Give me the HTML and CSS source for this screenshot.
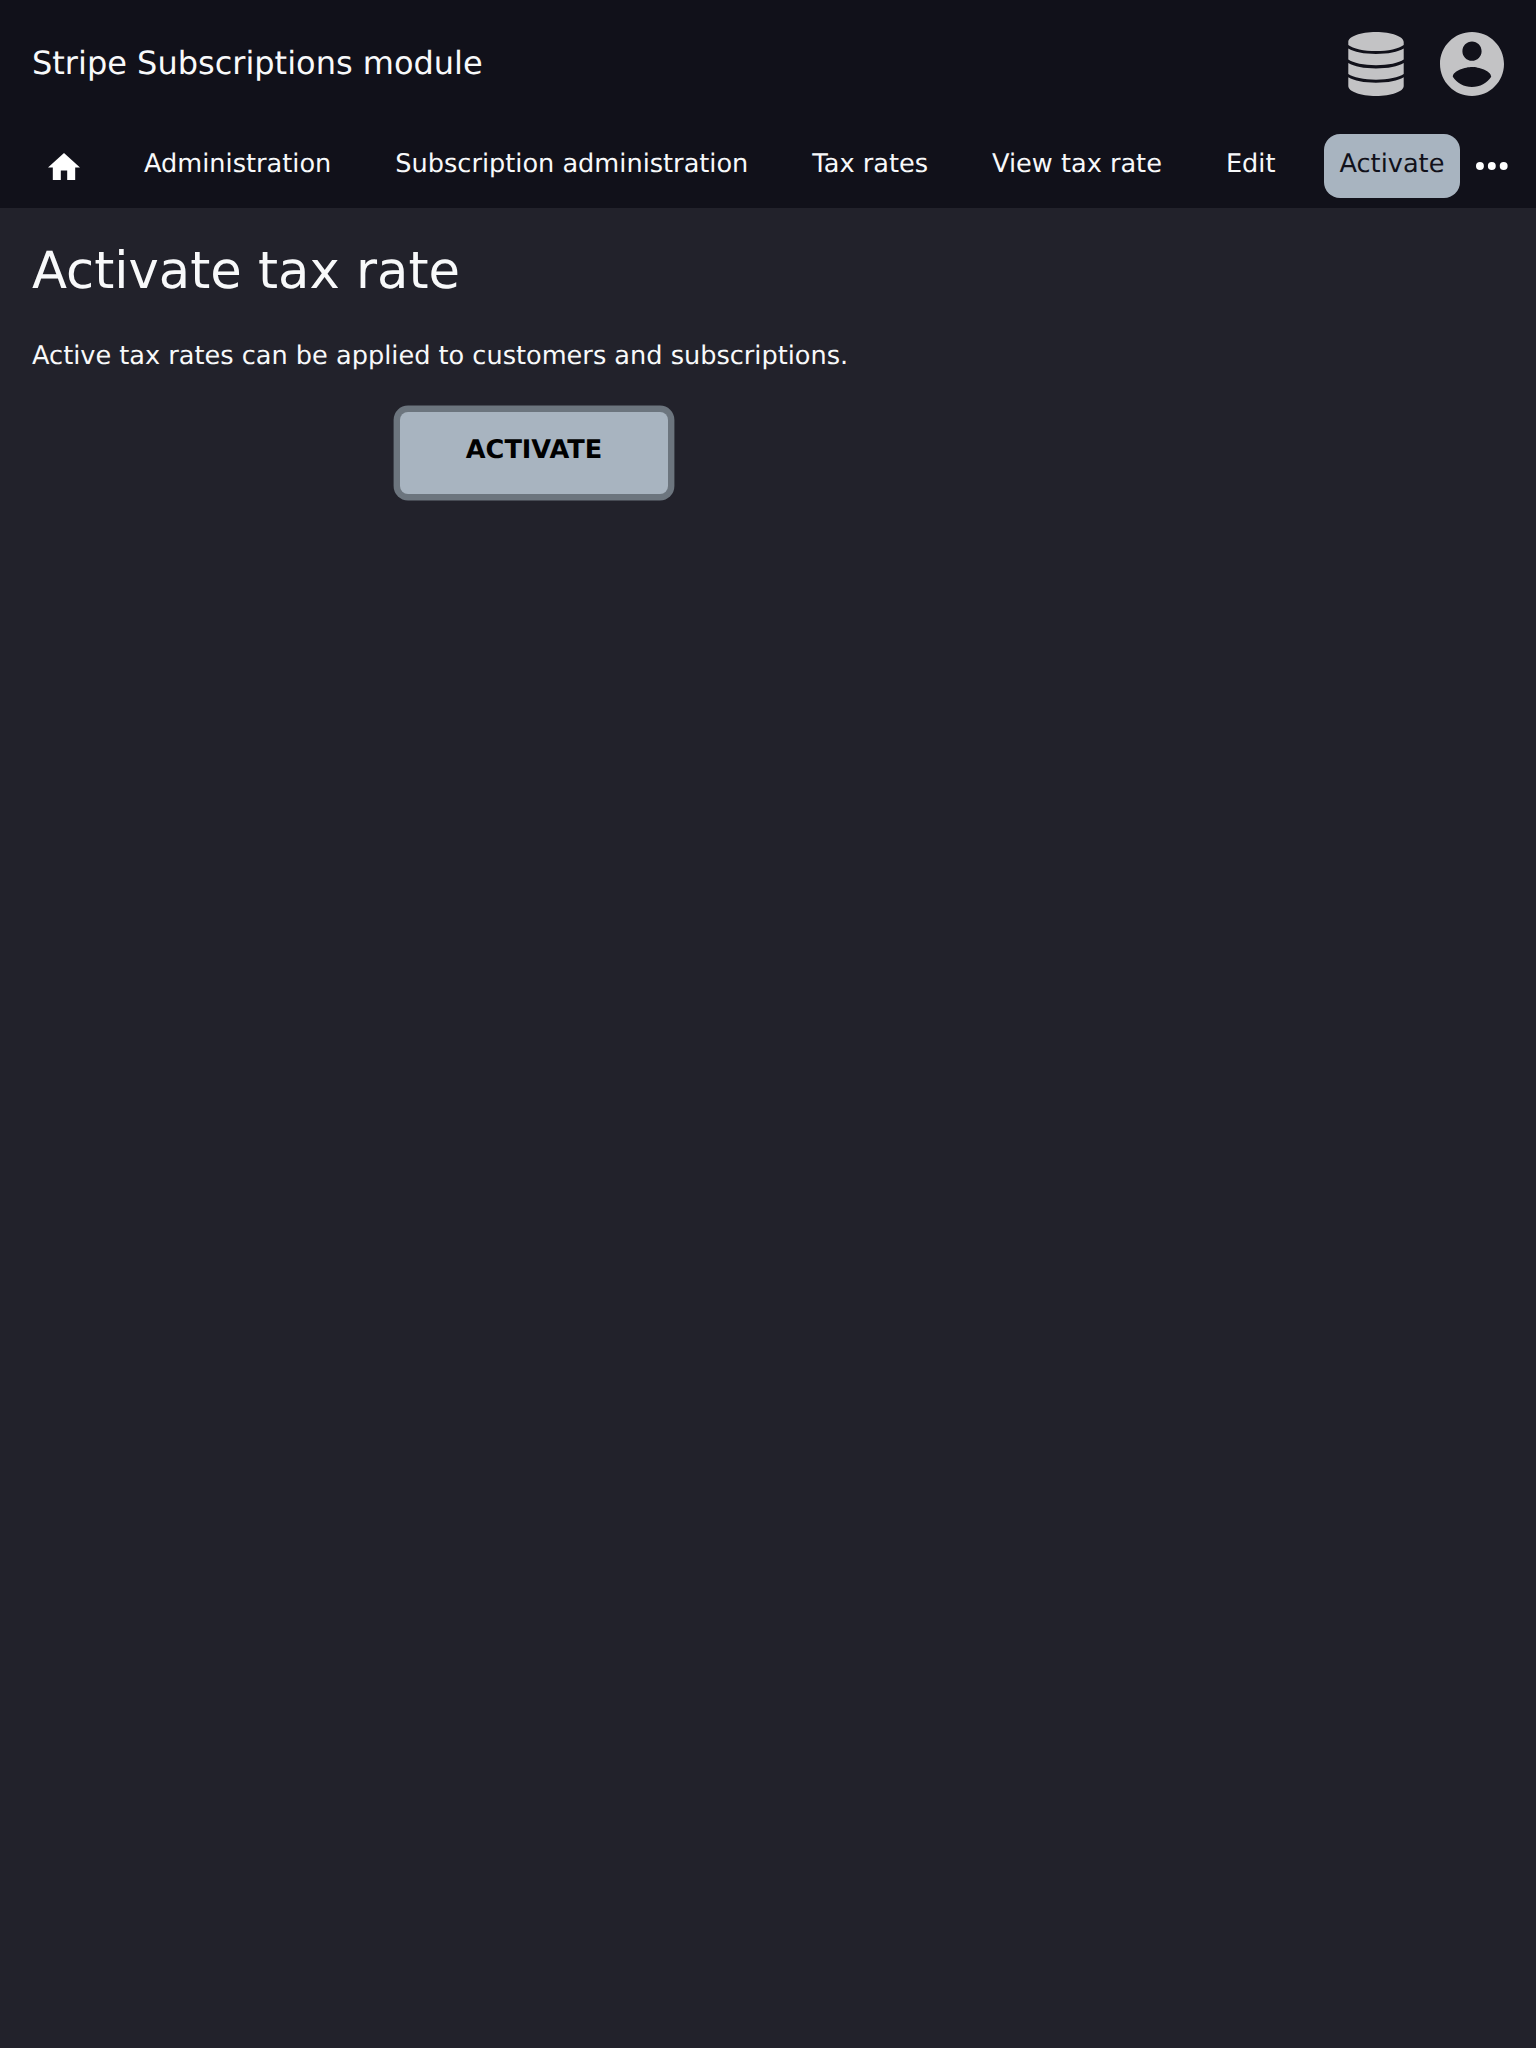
FILE: index.html
```html
<!DOCTYPE html>
<html lang="en">
<head>
<meta charset="utf-8">
<title>Activate tax rate</title>
<link rel="stylesheet" href="styles.css">
</head>
<body>
<header class="header">
  <div class="topbar">
    <span class="brand">Stripe Subscriptions module</span>
    <div class="tools">
      <svg class="icon-db" viewBox="0 0 56 64"><path d="M.3 10C.3 4.500 12.500 0 28 0s27.700 4.500 27.700 10v3C51 16.800 40 19.100 28 19.100S5 16.800.3 13zM.3 16.600C6 20.200 16 22 28 22s22-1.800 27.700-5.400v11C51 31 40 33.300 28 33.300S5 31 .3 27.600zM.3 31C6 34.600 16 36.400 28 36.400s22-1.800 27.700-5.400v11C51 45.400 40 47.700 28 47.700S5 45.400.3 42zM.3 45.300C6 48.900 16 50.700 28 50.700s22-1.800 27.700-5.400V54C55.700 59.500 43.500 64 28 64S.3 59.500.3 54z"/></svg>
      <svg class="icon-user" viewBox="2 2 20 20"><path d="M12 2C6.48 2 2 6.48 2 12s4.48 10 10 10 10-4.48 10-10S17.52 2 12 2zm0 3c1.66 0 3 1.34 3 3s-1.34 3-3 3-3-1.34-3-3 1.34-3 3-3zm0 14.2c-2.5 0-4.71-1.28-6-3.22.03-1.99 4-3.08 6-3.08 1.99 0 5.97 1.09 6 3.08-1.29 1.94-3.5 3.22-6 3.22z"/></svg>
    </div>
  </div>
  <nav class="nav">
    <a class="item home"><svg class="icon-home" viewBox="2 3 20 17"><path d="M10 20v-6h4v6h5v-8h3L12 3 2 12h3v8z"/></svg></a>
    <a class="item">Administration</a>
    <a class="item">Subscription administration</a>
    <a class="item">Tax rates</a>
    <a class="item">View tax rate</a>
    <a class="item">Edit</a>
    <a class="item active">Activate</a>
    <svg class="icon-more" viewBox="0 0 32 8"><circle cx="4" cy="4" r="4"/><circle cx="16" cy="4" r="4"/><circle cx="28" cy="4" r="4"/></svg>
  </nav>
</header>
<main class="main">
  <h1 class="title">Activate tax rate</h1>
  <p class="text">Active tax rates can be applied to customers and subscriptions.</p>
  <button class="submit">ACTIVATE</button>
</main>
</body>
</html>
```
FILE: styles.css
```css
body {
  margin: 0;
  min-height: 2048px;
  background: #22222b;
  color: #f8f9fa;
  font-family: "DejaVu Sans", sans-serif;
  font-size: 25.6px;
  text-rendering: geometricPrecision;
}
.header {
  height: 208px;
  background: #11111a;
}
.topbar {
  display: flex;
  justify-content: space-between;
  align-items: center;
  height: 64px;
  padding: 32px;
}
.brand {
  font-size: 32px;
  line-height: 38px;
  padding-bottom: 2px;
}
.tools {
  display: flex;
  gap: 36px;
}
.icon-db {
  width: 56px;
  height: 64px;
  fill: #c3c3c5;
}
.icon-user {
  width: 64px;
  height: 64px;
  fill: #c3c3c5;
}
.nav {
  display: flex;
  gap: 32px;
  padding: 6px 28px 0 32px;
}
.item {
  height: 64px;
  padding: 0 16px;
  box-sizing: border-box;
  line-height: 60px;
  border-radius: 16px;
  white-space: nowrap;
}
.home {
  display: flex;
  padding-top: 18.8px;
}
.icon-home {
  width: 32px;
  height: 27.2px;
  fill: #fff;
}
.active {
  margin-left: 1px;
  padding-left: 15px;
  background: #a8b4c0;
  color: #11111a;
}
.icon-more {
  width: 32px;
  height: 8px;
  margin: 28px 0 0 -16px;
  fill: #fff;
}
.main {
  padding: 32px;
}
.title {
  margin: 0;
  font-size: 51.2px;
  line-height: 62px;
  font-weight: 400;
}
.text {
  margin: 33px 0 35px;
  line-height: 42px;
}
.submit {
  display: block;
  width: 268px;
  height: 82px;
  margin-left: 368px;
  padding: 0 0 6px;
  border: 0;
  border-radius: 8px;
  background: #a8b4c0;
  box-shadow: 0 0 0 6.4px #6c757e;
  color: #000;
  font: 700 25.6px "DejaVu Sans", sans-serif;
  text-rendering: inherit;
}
```
